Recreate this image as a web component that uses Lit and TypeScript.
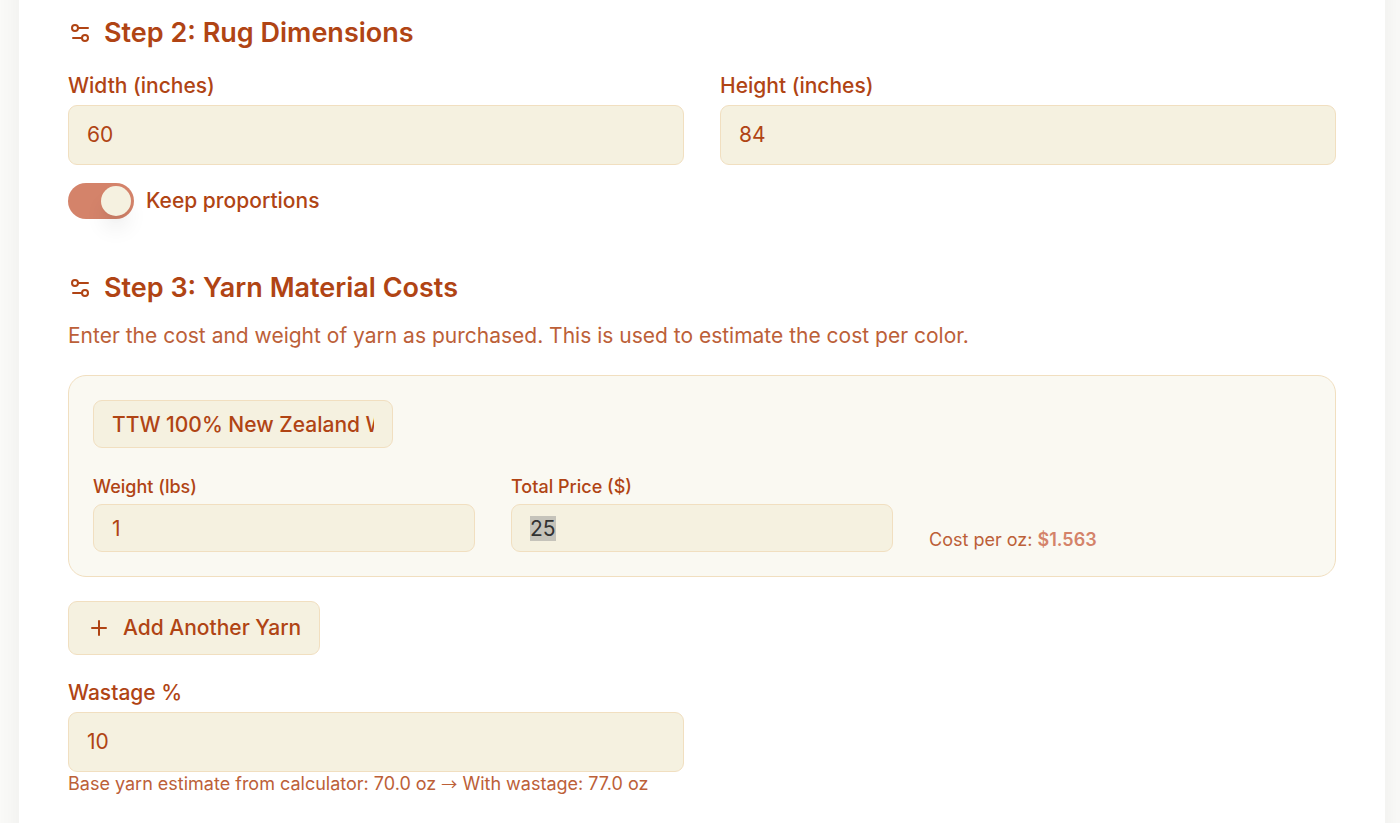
import { LitElement, html, css, svg } from "lit";
import { customElement, property, state } from "lit/decorators.js";

const settingsIcon = html`<svg class="icon" viewBox="0 0 24 24" aria-hidden="true">
  ${svg`<path d="M20 7h-9"/><path d="M14 17H5"/><circle cx="17" cy="17" r="3"/><circle cx="7" cy="7" r="3"/>`}
</svg>`;

const plusIcon = html`<svg class="icon" viewBox="0 0 24 24" aria-hidden="true">
  ${svg`<path d="M5 12h14"/><path d="M12 5v14"/>`}
</svg>`;

interface Yarn {
  name: string;
  weight: number;
  price: number;
}

@customElement("app-root")
export class AppRoot extends LitElement {
  @property({ type: Number }) baseOunces = 70;
  @state() private width = 60;
  @state() private height = 84;
  @state() private keep = true;
  @state() private wastage = 10;
  @state() private yarns: Yarn[] = [
    { name: "TTW 100% New Zealand Wool Yarn", weight: 1, price: 25 },
  ];

  static styles = css`
    :host {
      --ink: #b04414;
      --ink-soft: #bc6038;
      --accent: #d4836a;
      --field: #f5f1e0;
      --line: #f1dfc0;
      display: block;
      box-sizing: border-box;
      min-height: 100vh;
      padding: 0 15px 0 19px;
      background: #fcfcfa;
      overflow: hidden;
      color: var(--ink);
      font-family: Inter, sans-serif;
      font-size: 21px;
      line-height: 28px;
    }
    * { box-sizing: border-box; }
    .panel {
      min-height: calc(100vh + 96px);
      margin: -48px 0;
      padding: 60px 49px 72px;
      background: #fff;
      box-shadow: 0 0 36px rgba(0, 0, 0, 0.07);
      display: flex;
      flex-direction: column;
      gap: 48px;
    }
    .heading {
      display: flex;
      align-items: center;
      gap: 12px;
      margin: 0;
      font-size: 27px;
      line-height: 42px;
      font-weight: 600;
    }
    .icon {
      width: 24px;
      height: 24px;
      flex: none;
      fill: none;
      stroke: currentColor;
      stroke-width: 2;
      stroke-linecap: round;
      stroke-linejoin: round;
    }
    .dims, .costs { display: flex; flex-direction: column; }
    .dims { gap: 18px; }
    .costs { gap: 24px; }
    .intro { display: flex; flex-direction: column; gap: 12px; }
    .lead { margin: 0; line-height: 30px; color: var(--ink-soft); }
    .two { display: grid; grid-template-columns: 1fr 1fr; gap: 36px; }
    .three { display: grid; grid-template-columns: repeat(3, 1fr); gap: 36px; align-items: end; }
    .field { display: flex; flex-direction: column; gap: 5px; min-width: 0; }
    .label { font-weight: 500; }
    .small { font-size: 18px; line-height: 24px; }
    .input {
      width: 100%;
      height: 60px;
      margin: 0;
      padding: 0 18px 2px;
      border: 1px solid var(--line);
      border-radius: 9px;
      background: var(--field);
      color: inherit;
      font: inherit;
      outline: none;
      appearance: textfield;
    }
    .input::-webkit-inner-spin-button,
    .input::-webkit-outer-spin-button { appearance: none; margin: 0; }
    .input::selection { background: #c5c3ba; color: #323232; }
    .compact { height: 48px; padding-bottom: 0; }
    .name { width: 300px; font-weight: 500; }
    .keep { display: flex; align-items: center; gap: 12px; }
    .switch {
      appearance: none;
      display: flex;
      width: 66px;
      height: 36px;
      margin: 0;
      padding: 3px;
      border-radius: 18px;
      background: #e5dcc8;
    }
    .switch::before {
      content: "";
      width: 30px;
      height: 30px;
      border-radius: 50%;
      background: var(--field);
      box-shadow: 0 15px 22px -4px rgba(0, 0, 0, 0.1), 0 6px 9px -6px rgba(0, 0, 0, 0.1);
    }
    .switch:checked { justify-content: flex-end; background: var(--accent); }
    .yarn {
      display: flex;
      flex-direction: column;
      gap: 27px;
      padding: 24px;
      border: 1px solid var(--line);
      border-radius: 18px;
      background: #faf9f2;
    }
    .cost { margin: 0; color: var(--ink-soft); }
    .amount { font-weight: 600; color: var(--accent); }
    .add {
      display: flex;
      align-items: center;
      align-self: flex-start;
      gap: 12px;
      height: 54px;
      margin: 0;
      padding: 0 18px;
      border: 1px solid var(--line);
      border-radius: 9px;
      background: var(--field);
      color: inherit;
      font: inherit;
      font-weight: 500;
    }
    .hint { margin: 0; color: var(--ink-soft); }
    .arrow { font-family: "Noto Sans CJK SC", sans-serif; font-size: 16px; line-height: 1; }
  `;

  firstUpdated() {
    const price = this.renderRoot.querySelector<HTMLInputElement>("#price-0");
    price?.focus();
    price?.select();
  }

  private num(e: Event) {
    return Number((e.target as HTMLInputElement).value);
  }

  private setWidth(e: Event) {
    const next = this.num(e);
    if (this.keep && this.width) this.height = Math.round((next * this.height) / this.width);
    this.width = next;
  }

  private setHeight(e: Event) {
    const next = this.num(e);
    if (this.keep && this.height) this.width = Math.round((next * this.width) / this.height);
    this.height = next;
  }

  private patch(i: number, change: Partial<Yarn>) {
    this.yarns = this.yarns.map((y, n) => (n === i ? { ...y, ...change } : y));
  }

  private yarnCard(y: Yarn, i: number) {
    const perOunce = y.weight ? y.price / (y.weight * 16) : 0;
    return html`<div class="yarn">
      <input class="input compact name" type="text" aria-label="Yarn name" .value=${y.name}
        @change=${(e: Event) => this.patch(i, { name: (e.target as HTMLInputElement).value })} />
      <div class="three">
        <div class="field">
          <label class="label small" for="weight-${i}">Weight (lbs)</label>
          <input class="input compact" id="weight-${i}" type="number" .value=${String(y.weight)}
            @change=${(e: Event) => this.patch(i, { weight: this.num(e) })} />
        </div>
        <div class="field">
          <label class="label small" for="price-${i}">Total Price ($)</label>
          <input class="input compact" id="price-${i}" type="number" .value=${String(y.price)}
            @change=${(e: Event) => this.patch(i, { price: this.num(e) })} />
        </div>
        <p class="cost small">Cost per oz: <span class="amount">$${perOunce.toFixed(3)}</span></p>
      </div>
    </div>`;
  }

  render() {
    const total = this.baseOunces * (1 + this.wastage / 100);
    return html`<main class="panel">
      <section class="dims">
        <h2 class="heading">${settingsIcon}<span>Step 2: Rug Dimensions</span></h2>
        <div class="two">
          <div class="field">
            <label class="label" for="width">Width (inches)</label>
            <input class="input" id="width" type="number" .value=${String(this.width)} @change=${this.setWidth} />
          </div>
          <div class="field">
            <label class="label" for="height">Height (inches)</label>
            <input class="input" id="height" type="number" .value=${String(this.height)} @change=${this.setHeight} />
          </div>
        </div>
        <div class="keep">
          <input class="switch" id="keep" type="checkbox" role="switch" .checked=${this.keep}
            @change=${(e: Event) => (this.keep = (e.target as HTMLInputElement).checked)} />
          <label class="label" for="keep">Keep proportions</label>
        </div>
      </section>
      <section class="costs">
        <div class="intro">
          <h2 class="heading">${settingsIcon}<span>Step 3: Yarn Material Costs</span></h2>
          <p class="lead">Enter the cost and weight of yarn as purchased. This is used to estimate the cost per color.</p>
        </div>
        ${this.yarns.map((y, i) => this.yarnCard(y, i))}
        <button class="add" type="button"
          @click=${() => (this.yarns = [...this.yarns, { name: "New Yarn", weight: 1, price: 0 }])}>
          ${plusIcon}<span>Add Another Yarn</span>
        </button>
        <div class="two">
          <div>
            <div class="field">
              <label class="label" for="wastage">Wastage %</label>
              <input class="input" id="wastage" type="number" .value=${String(this.wastage)}
                @change=${(e: Event) => (this.wastage = this.num(e))} />
            </div>
            <p class="hint small">Base yarn estimate from calculator: ${this.baseOunces.toFixed(1)} oz <span class="arrow">→</span> With wastage: ${total.toFixed(1)} oz</p>
          </div>
        </div>
      </section>
    </main>`;
  }
}
